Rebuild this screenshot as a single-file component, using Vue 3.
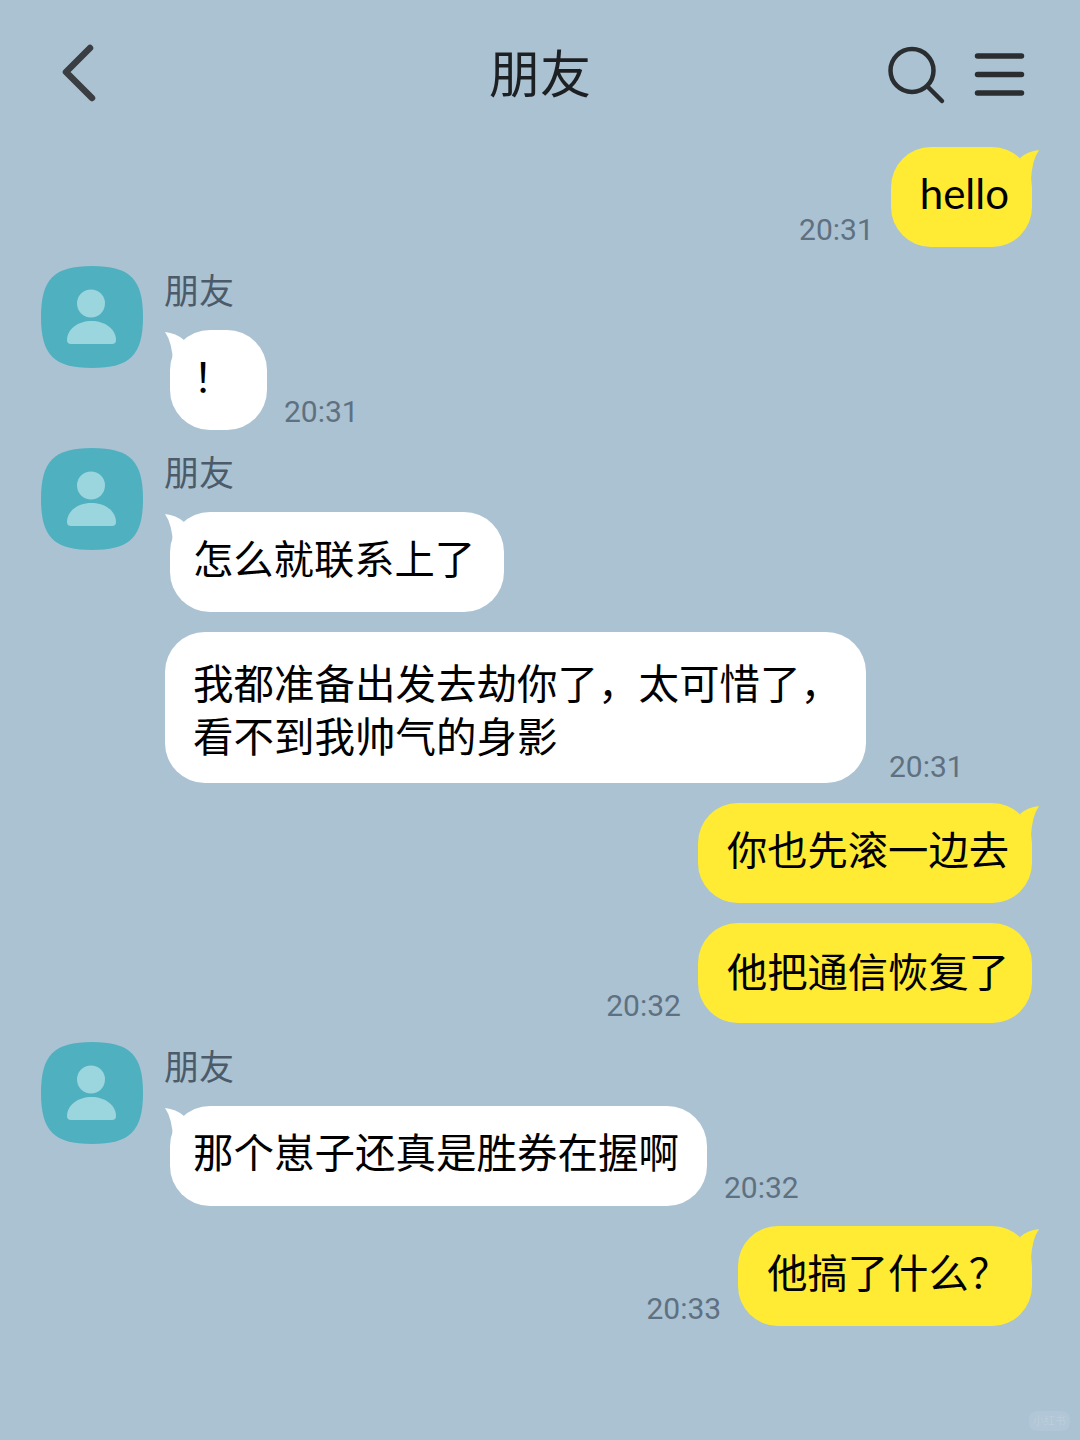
<template>
  <div class="chat">
    <header class="top-bar">
      <svg class="back" width="40" height="62" viewBox="0 0 40 62">
        <path d="M30 5 L6 29 L32 55" />
      </svg>
      <h1>朋友</h1>
      <div class="top-actions">
        <svg class="search" width="60" height="64" viewBox="0 0 60 64">
          <circle cx="26" cy="28.5" r="21.5" />
          <path d="M42 45 L56 59" />
        </svg>
        <svg class="menu" width="56" height="50" viewBox="0 0 56 50">
          <path d="M6.5 7 H50.5 M6.5 25.5 H50.5 M6.5 44 H50.5" />
        </svg>
      </div>
    </header>

    <div class="messages">
      <div
        v-for="msg in messages"
        :key="msg.id"
        class="msg"
        :class="[msg.me ? 'me' : 'friend', { 'with-avatar': msg.avatar, tight: msg.tight }]"
      >
        <svg v-if="msg.avatar" class="avatar" width="102" height="102" viewBox="0 0 102 102">
          <path class="avatar-bg" d="M51 0 C89 0 102 13 102 51 C102 89 89 102 51 102 C13 102 0 89 0 51 C0 13 13 0 51 0 Z" />
          <circle class="avatar-fg" cx="50" cy="37.5" r="14" />
          <path class="avatar-fg" d="M26 74 C26 63 37 55 50.5 55 C64 55 75 63 75 74 Q75 78 71 78 H30 Q26 78 26 74 Z" />
        </svg>
        <div class="msg-body">
          <div v-if="msg.avatar" class="name">朋友</div>
          <div class="line">
            <span v-if="msg.me && msg.time" class="time">{{ msg.time }}</span>
            <div class="bubble" :class="{ 'has-tail': msg.tail, wide: msg.wide, long: msg.long, latin: msg.latin, low: msg.low }">
              <svg v-if="msg.tail" class="tail" width="30" height="32" viewBox="0 0 30 32">
                <path d="M1 2 Q12 3 20 10 L9 32 Q8 12 1 2 Z" />
              </svg>
              <template v-for="(row, i) in msg.text" :key="i">
                <br v-if="i > 0" />{{ row }}
              </template>
            </div>
            <span v-if="!msg.me && msg.time" class="time" :class="{ far: msg.wide }">{{ msg.time }}</span>
          </div>
        </div>
      </div>
    </div>

    <div class="watermark">小红书</div>
  </div>
</template>

<script setup>
const messages = [
  { id: 1, me: true, tail: true, latin: true, text: ['hello'], time: '20:31' },
  { id: 2, avatar: true, tail: true, text: ['！'], time: '20:31' },
  { id: 3, avatar: true, tail: true, tight: true, text: ['怎么就联系上了'] },
  { id: 4, wide: true, text: ['我都准备出发去劫你了，太可惜了，', '看不到我帅气的身影'], time: '20:31' },
  { id: 5, me: true, tail: true, text: ['你也先滚一边去'] },
  { id: 6, me: true, low: true, text: ['他把通信恢复了'], time: '20:32' },
  { id: 7, avatar: true, tail: true, long: true, text: ['那个崽子还真是胜券在握啊'], time: '20:32' },
  { id: 8, me: true, tail: true, text: ['他搞了什么？'], time: '20:33' }
]
</script>

<style>
html, body {
  margin: 0;
  background: #abc2d3;
}
</style>

<style scoped>
.chat {
  position: relative;
  height: 1440px;
  overflow: hidden;
  background: #abc2d3;
  font-family: Lato, "Noto Sans CJK SC", sans-serif;
  color: #000;
}

.top-bar {
  display: grid;
  grid-template-columns: 1fr auto 1fr;
  align-items: center;
  height: 147px;
  padding: 0 53px;
}

.top-bar h1 {
  margin: 0;
  font-size: 51px;
  font-weight: 400;
  line-height: 60px;
  color: #1d2022;
}

.top-bar svg {
  display: block;
  fill: none;
  stroke-linecap: round;
  stroke-linejoin: round;
}

.back {
  margin-left: 7px;
  stroke: #3a3d41;
  stroke-width: 6.5px;
}

.top-actions {
  display: flex;
  align-items: center;
  justify-content: flex-end;
  gap: 25px;
}

.search {
  stroke: #2b2e31;
  stroke-width: 4.5px;
}

.menu {
  stroke: #2b2e31;
  stroke-width: 5.5px;
}

.messages {
  display: flex;
  flex-direction: column;
}

.msg {
  display: flex;
  margin-top: 20px;
  padding: 0 48px 0 165px;
}

.msg:first-child {
  margin-top: 0;
}

.msg.me {
  justify-content: flex-end;
}

.msg.with-avatar {
  gap: 21px;
  margin-top: 19px;
  padding-left: 41px;
}

.msg.tight {
  margin-top: 18px;
}

.avatar-bg {
  fill: #4fb0bf;
}

.avatar-fg {
  fill: #9bd5de;
}

.name {
  height: 50px;
  margin-bottom: 14px;
  font-size: 35px;
  line-height: 48px;
  color: #4b5b69;
}

.line {
  display: flex;
  align-items: flex-end;
}

.bubble {
  position: relative;
  box-sizing: border-box;
  min-width: 97px;
  min-height: 100px;
  padding: 20px 29px 27px;
  border-radius: 40px;
  background: #fff;
  font-size: 40.3px;
  line-height: 53px;
  white-space: nowrap;
}

.bubble.latin {
  font-size: 42px;
}

.bubble.low {
  padding-top: 22px;
  padding-bottom: 25px;
}

.friend .bubble.has-tail {
  margin-left: 6px;
  padding-left: 23px;
}

.friend .bubble.long {
  padding-right: 28px;
  font-size: 40.5px;
}

.me .bubble {
  padding-right: 23px;
  background: #ffeb33;
}

.bubble.wide {
  min-height: 0;
  padding: 25px 25px 20px 28px;
  font-size: 40.5px;
}

.tail {
  position: absolute;
  top: 0;
  left: -6px;
  fill: #fff;
}

.me .tail {
  right: -8px;
  left: auto;
  top: 1px;
  transform: scaleX(-1);
  fill: #ffeb33;
}

.time {
  margin: 0 17px 0 17px;
  font-family: Roboto, sans-serif;
  font-size: 30px;
  line-height: 36px;
  color: #5f7181;
}

.me .time {
  margin: 0 17px -1px 0;
}

.friend .time.far {
  margin: 0 0 -2px 23px;
}

.watermark {
  position: absolute;
  right: 10px;
  bottom: 9px;
  padding: 0 4px;
  border-radius: 8px;
  background: rgba(255, 255, 255, 0.08);
  font-size: 11px;
  line-height: 20px;
  color: rgba(255, 255, 255, 0.16);
}
</style>
